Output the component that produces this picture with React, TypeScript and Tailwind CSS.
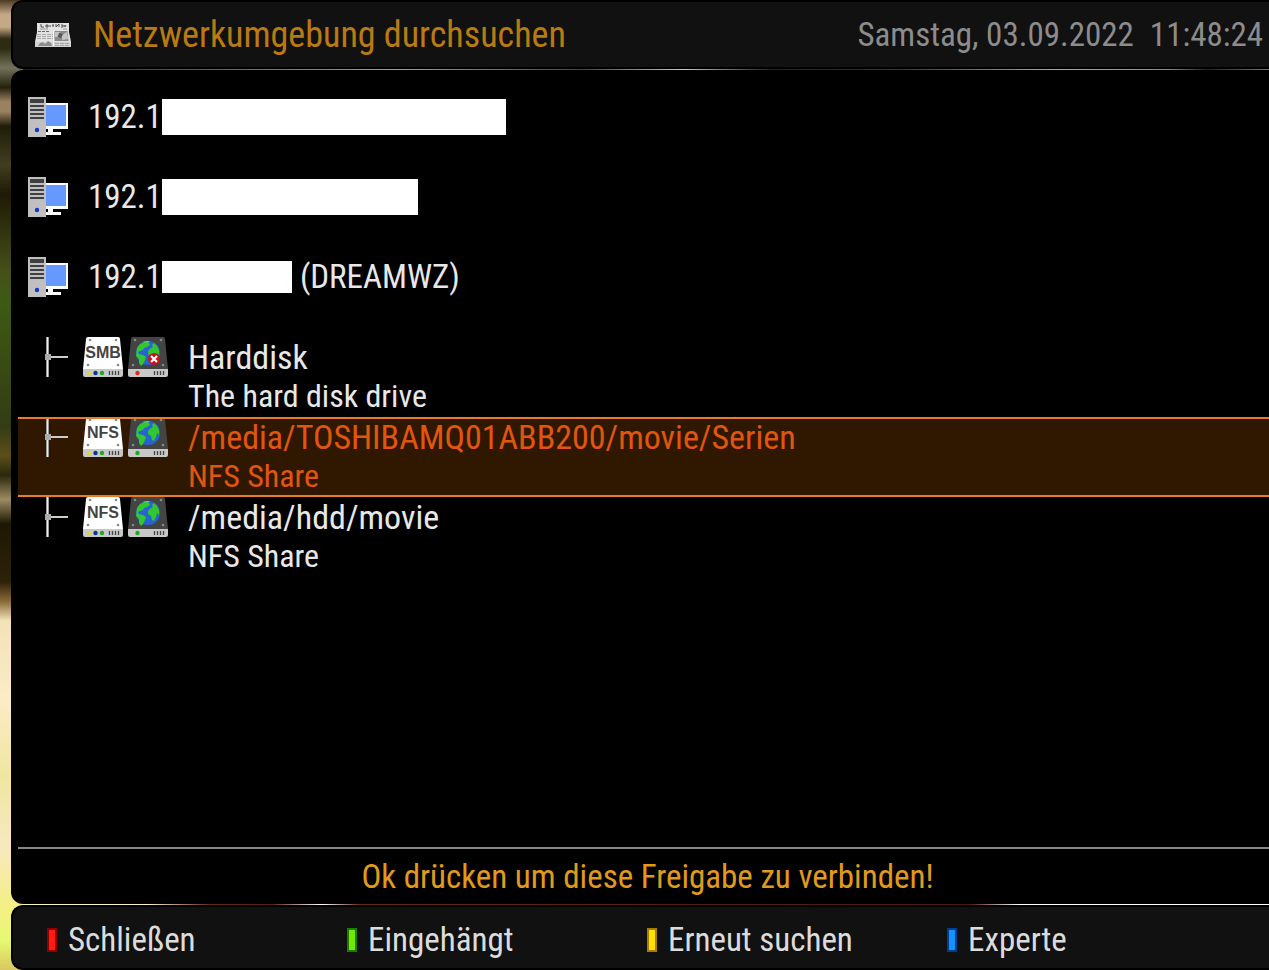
import React, {useState} from "react";

interface Share {
    type: "SMB" | "NFS";
    name: string;
    comment: string;
    failed?: boolean;
}

interface Host {
    prefix: string;
    maskClass: string;
    suffix?: string;
}

const hosts: Host[] = [
    {prefix: "192.1", maskClass: "h-9 w-[344px]"},
    {prefix: "192.1", maskClass: "h-9 w-64"},
    {prefix: "192.1", maskClass: "h-8 w-[130px]", suffix: "(DREAMWZ)"},
];

const shares: Share[] = [
    {type: "SMB", name: "Harddisk", comment: "The hard disk drive", failed: true},
    {type: "NFS", name: "/media/TOSHIBAMQ01ABB200/movie/Serien", comment: "NFS Share"},
    {type: "NFS", name: "/media/hdd/movie", comment: "NFS Share"},
];

const actions = [
    {label: "Schließen", keyClass: "border-[#8c0000] bg-[#ff1a12]"},
    {label: "Eingehängt", keyClass: "border-[#1f7a00] bg-[#72ea00]"},
    {label: "Erneut suchen", keyClass: "border-[#a87c00] bg-[#ffe000]"},
    {label: "Experte", keyClass: "border-[#003f8c] bg-[#1592ff]"},
];

const NewsIcon = () => (
    <svg className="h-6 w-9 shrink-0" viewBox="0 0 36 24" aria-hidden="true">
        <path d="M2 0h32v9l2 10v5H0v-5L2 9z" fill="#e2e2e2"/>
        <path d="M0 19v5h36v-5" fill="#c6c6c6" opacity=".6"/>
        <path d="M6 1v3h3M11 2h2v2h-2zM15 2v2M17 2h2M18 2v2M21 1v3l3-3v3M26 2h2v2h-2M29 2l1 2 1-2" fill="none" stroke="#444" strokeWidth=".9"/>
        <path d="M5 6h8M28 6h4" stroke="#888" strokeWidth=".8"/>
        <path d="M3 8.500h11" stroke="#666" strokeDasharray="3 1"/>
        <path d="M2 11.500h16M2 13.500h16M2 15.500h16M20 20.500h14M20 22.500h14" stroke="#aaa" strokeDasharray="4 1"/>
        <path d="M19.500 8h13l1 10h-14z" fill="#8a8a8a"/>
        <path d="M20 9h5l-3 5h-2zM27 12l5-3 1 7-6 1z" fill="#c4c4c4"/>
        <path d="M24 10l4 1-2 4-3-1z" fill="#555"/>
        <path d="M3 23l2-3 3-1 2 2 3-3 3 2 1 3z" fill="#8c8c8c"/>
        <path d="M18.500 8v15" stroke="#f4f4f4"/>
    </svg>
);

const ComputerIcon = () => (
    <svg className="size-10 shrink-0" viewBox="0 0 40 40" aria-hidden="true">
        <path d="M18 6h22v26H18z" fill="#fff"/>
        <path d="M18 8h20v21H18z" fill="#6699ff"/>
        <path d="M20 32h5v3h8v3H18v-3h2z" fill="#fff"/>
        <path d="M0 0h18v40H0z" fill="#c0c0c0"/>
        <path d="M2 2h14v4H2zM2 8h14v2H2zM2 12h14v2H2zM2 16h14v2H2zM2 20h14v2H2z" fill="#404040"/>
        <circle cx="9" cy="33" r="2.200" fill="#1238cc"/>
    </svg>
);

const BranchIcon = () => (
    <svg className="h-10 w-6 shrink-0" viewBox="0 0 24 40" aria-hidden="true">
        <path d="M2 0h3v40H2z" fill="#999"/>
        <path d="M3 0h1v40H3z" fill="#eee"/>
        <path d="M4 19h20v2H4z" fill="#ccc"/>
        <path d="M1 17h6v6H1z" fill="#aaa"/>
    </svg>
);

const DriveBase = ({body}: { body: string }) => (
    <>
        <path d="M5 0h30q2 0 2 2l3 30H0L3 2q0-2 2-2z" fill={body}/>
        <path d="M0 32h40v6q0 2-2 2H2q-2 0-2-2z" fill="#c8c8c8"/>
        <g fill="#888">
            <circle cx="7" cy="3" r="1.300"/>
            <circle cx="33" cy="3" r="1.300"/>
            <circle cx="5" cy="28" r="1.300"/>
            <circle cx="35" cy="28" r="1.300"/>
        </g>
        <path d="M26.500 34v4M29.500 34v4M32.500 34v4M35.500 34v4" stroke="#444" strokeWidth="1.300"/>
    </>
);

const ProtocolIcon = ({type}: { type: Share["type"] }) => (
    <svg className="size-10 shrink-0" viewBox="0 0 40 40" role="img" aria-label={type}>
        <DriveBase body="#fff"/>
        <text x="20" y="21" textAnchor="middle" fontFamily="Liberation Sans, sans-serif" fontWeight="700" fontSize="16" fill="#444">{type}</text>
        <circle cx="6.500" cy="36" r="2.200" fill="#d8d840"/>
        <circle cx="12.500" cy="36" r="2.200" fill="#1230a0"/>
        <circle cx="19" cy="36" r="2.200" fill="#20a820"/>
    </svg>
);

const MountIcon = ({failed}: { failed?: boolean }) => (
    <svg className="size-10 shrink-0" viewBox="0 0 40 40" aria-hidden="true">
        <DriveBase body="#444"/>
        <circle cx="20" cy="16" r="12" fill="#2864d0"/>
        <path d="M9 11l3-4 5-2 4 1 1 2-3 2-3 1-1 2-3 1-2 1 1 2 4 1 3 2-1 3-2 4-2 2-2-3v-4l-3-3z" fill="#30c82c"/>
        <path d="M23 11l2-1-1-2 2-2 3 3 2 4v5l-2-2-1 4-2 4-2-1-1-4-3-2v-3z" fill="#30c82c"/>
        <path d="M14 5l4-1h4l-2 2z" fill="#48d848"/>
        <circle cx="9.500" cy="36" r="2.200" fill={failed ? "#d83020" : "#20a820"}/>
        {failed && (
            <>
                <circle cx="26" cy="22" r="6" fill="#cc1018"/>
                <path d="M23 19l6 6M29 19l-6 6" stroke="#fff" strokeWidth="2.200"/>
            </>
        )}
    </svg>
);

const App = () => {
    const [selected, setSelected] = useState(1);

    return (
        <div
            className="flex min-h-screen flex-col overflow-hidden bg-[linear-gradient(180deg,#4a3a20_0%,#c5a888_1.500%,#c5a888_2.800%,#2c2c12_4%,#2c2c12_5%,#73725b_7%,#24200c_9%,#9a8260_10.500%,#9a8260_11.500%,#1e1e08_13%,#403d20_17%,#1e1a05_20%,#46501a_28%,#3e5a14_31%,#343c14_44%,#5c4e1a_47%,#2a280c_49%,#9c8b62_51.500%,#1d1803_54%,#2e2208_60%,#8a6a38_62%,#f3e2b8_64%,#faecc8_72%,#f0e6a0_80%,#f8e8c0_87%,#f4f080_94%,#e6f870_97%,#d8c860_100%)] pl-[11px] font-['Roboto_Condensed','Liberation_Sans_Narrow',Roboto,sans-serif] text-[#e8e8e8]">
            <header className="flex h-[69px] items-center justify-between rounded-l-xl border-y-2 border-l-2 border-black bg-[#111] pr-1.5 pl-[22px] whitespace-nowrap">
                <div className="flex items-center gap-[22px]">
                    <NewsIcon/>
                    <h1 className="text-[36px] leading-10 text-[#b97a12]">Netzwerkumgebung durchsuchen</h1>
                </div>
                <p className="flex gap-4 text-[33px] leading-10 text-[#8c8c8c]">
                    <span>Samstag, 03.09.2022</span>
                    <span>11:48:24</span>
                </p>
            </header>
            <div className="ml-3 h-px bg-[linear-gradient(90deg,#222211_0%,#77775a_20%,#a0a090_30%,#444_45%,#c8c8c8_53%,#222_60%,#333_70%,#b8a888_83%,#998860_92%,#222_95%,#777_100%)]"/>

            <main className="flex flex-1 flex-col rounded-l-xl bg-black pt-[27px] pl-[7px]">
                <ul>
                    {hosts.map((host, index) => (
                        <li key={index} className="flex h-20 items-start pl-2.5">
                            <ComputerIcon/>
                            <div className="flex h-10 items-center pl-5 text-[33px] leading-10">
                                <span>{host.prefix}</span>
                                <span className={`bg-white ${host.maskClass}`}/>
                                {host.suffix && <span className="pl-2">{host.suffix}</span>}
                            </div>
                        </li>
                    ))}
                    {shares.map((share, index) => (
                        <li key={share.name}>
                            <button
                                type="button"
                                onClick={() => setSelected(index)}
                                className={`relative flex h-20 w-full items-start pl-[26px] text-left ${
                                    selected === index
                                        ? 'bg-[#301800] text-[#e0560f] after:absolute after:inset-0 after:border-y-2 after:border-[#e87c28]'
                                        : ''
                                }`}
                            >
                                <BranchIcon/>
                                <span className="flex gap-[5px] pl-[15px]">
                                    <ProtocolIcon type={share.type}/>
                                    <MountIcon failed={share.failed}/>
                                </span>
                                <span className="flex flex-col pl-5">
                                    <span className="text-[34px] leading-10">{share.name}</span>
                                    <span className="text-[32px] leading-[38px]">{share.comment}</span>
                                </span>
                            </button>
                        </li>
                    ))}
                </ul>
                <p className="mt-auto border-t-2 border-[#85858a] pt-2 pb-[7px] pl-2 text-center text-[33px] leading-10 text-[#e09a1c]">
                    Ok drücken um diese Freigabe zu verbinden!
                </p>
            </main>
            <div className="ml-3 h-px bg-[linear-gradient(90deg,#f8f8a8_0%,#fff0c8_10%,#602818_15%,#582018_20%,#fff_24%,#602818_27%,#481810_76%,#fff_80%,#fff_100%)]"/>

            <footer className="flex h-[65px] items-center rounded-l-xl border-y-2 border-l-2 border-black bg-[#111] pt-1 pl-[34px]">
                {actions.map((action) => (
                    <button key={action.label} type="button" className="flex w-[300px] items-center gap-[11px] text-[33px] leading-10 whitespace-nowrap text-[#dcdcdc]">
                        <span className={`h-6 w-2.5 border-2 ${action.keyClass}`}/>
                        {action.label}
                    </button>
                ))}
            </footer>
        </div>
    );
};

export default App;
